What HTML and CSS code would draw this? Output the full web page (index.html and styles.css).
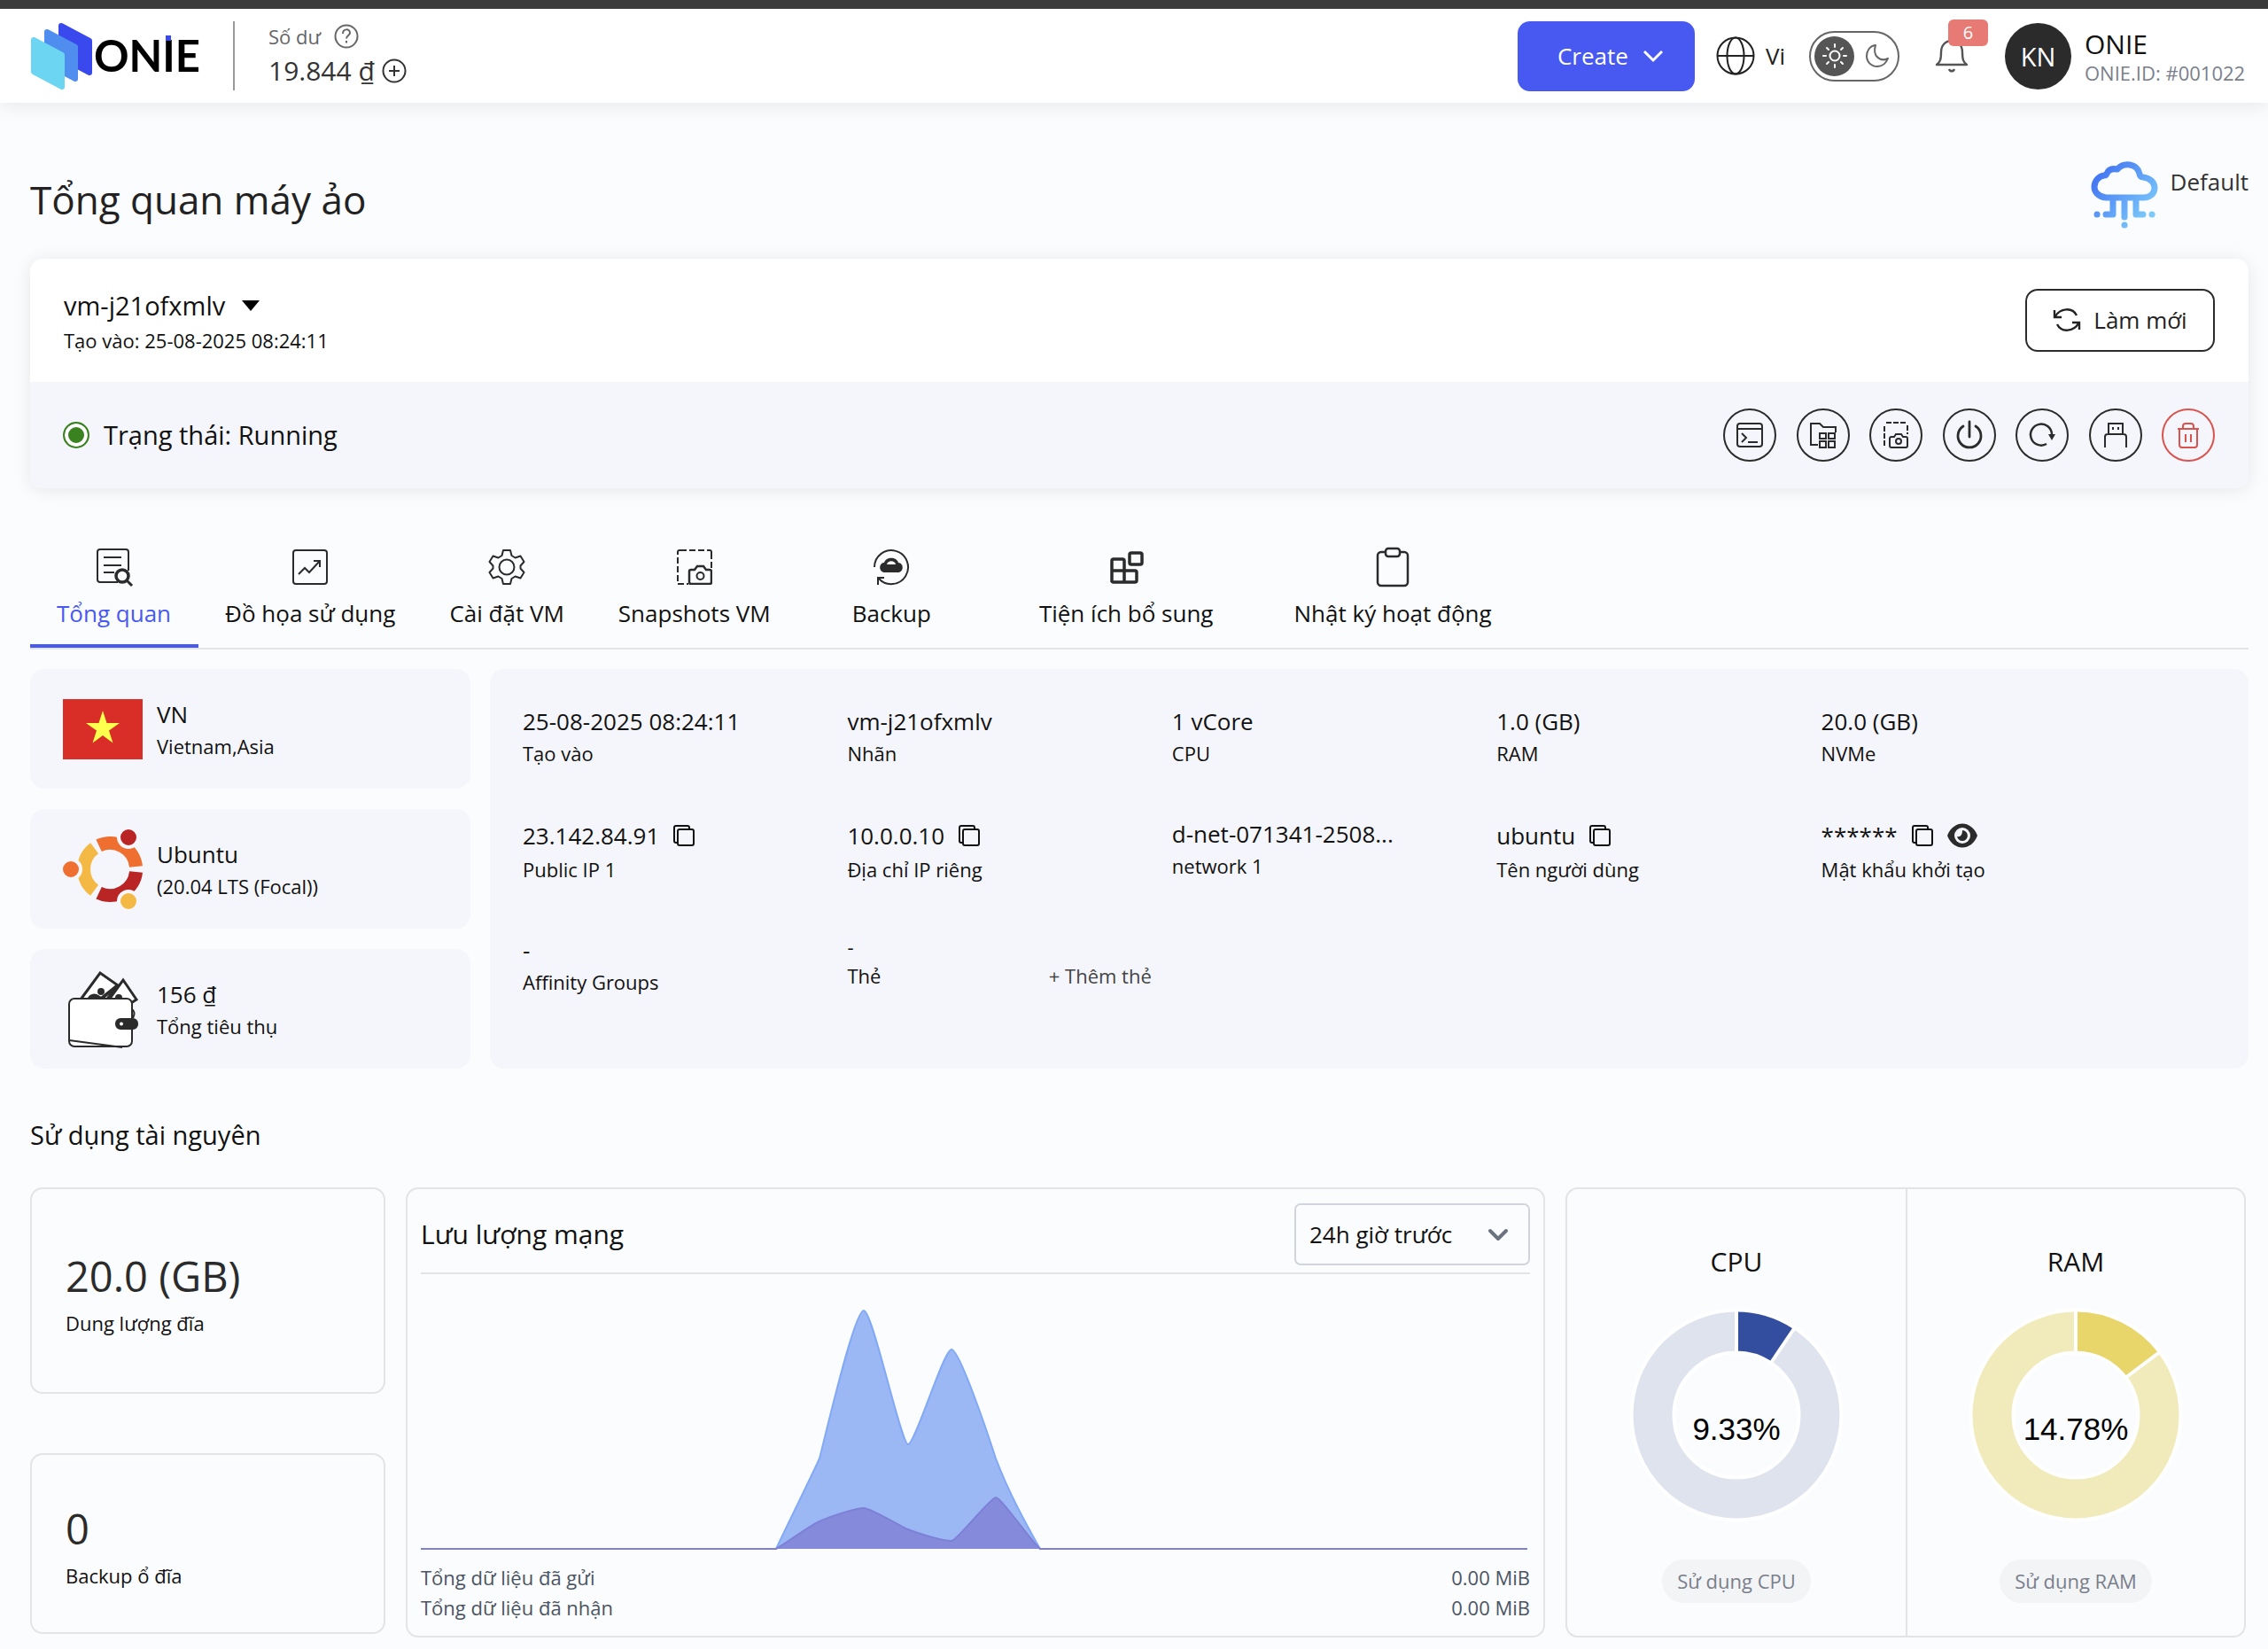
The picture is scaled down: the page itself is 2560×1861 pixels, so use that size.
FILE: index.html
```html
<!DOCTYPE html>
<html lang="vi">
<head>
  <meta charset="UTF-8" />
  <meta name="viewport" content="width=device-width, initial-scale=1.0"/>
  <title>Tổng quan máy ảo</title>
  <link rel="stylesheet" href="styles.css">
</head>
<body>
  <!-- shared icons -->
  <svg class="sprite" aria-hidden="true">
    <symbol id="copy" viewBox="0 0 24 24"><path d="M18 4V3a2 2 0 0 0-2-2H3a2 2 0 0 0-2 2v15a2 2 0 0 0 2 2h2" fill="none" stroke="currentColor" stroke-width="2"/><rect x="5" y="5" width="18" height="18" rx="2" fill="none" stroke="currentColor" stroke-width="2"/></symbol>
    <symbol id="snapshot" viewBox="0 0 40 40"><g fill="none" stroke="currentColor" stroke-width="2"><path d="M1 36V4M4 1h32M39 4v20M1 39h12" stroke-dasharray="7 3"/><path d="M1 5V3a2 2 0 0 1 2-2h3M34 1h3a2 2 0 0 1 2 2v3"/><path stroke-width="2.500" d="M14 25a2 2 0 0 1 2-2h4l3-4h7l3 4h4a2 2 0 0 1 2 2v12a2 2 0 0 1-2 2H16a2 2 0 0 1-2-2z"/><circle cx="26.500" cy="30" r="4"/></g></symbol>
  </svg>

  <header class="header">
    <a href="#" class="logo" aria-label="ONIE">
      <svg width="192" height="76" viewBox="0 0 192 76">
        <g stroke-width="6" stroke-linejoin="round">
          <path d="M34 4l32 17v36L34 40z" fill="#3a49ee" stroke="#3a49ee"/>
          <path d="M18 11l32 17v36L18 47z" fill="#4f8eef" stroke="#4f8eef"/>
          <path d="M3 20l32 17v36L3 56z" fill="#6bd5f2" stroke="#6bd5f2"/>
        </g>
        <text x="71" y="56" class="logo-text">ONIE</text>
        <rect x="152" y="15" width="6" height="6" fill="#3a49ee"/>
      </svg>
    </a>
    <div class="balance">
      <div class="balance-label">Số dư
        <svg width="28" height="28" viewBox="0 0 28 28" fill="none" stroke="currentColor" stroke-width="2"><circle cx="14" cy="14" r="12.500"/><path d="M10 11c0-6 8-6 8-1 0 3-4 3-4 6.500M14 19v2.500"/></svg>
      </div>
      <div class="balance-value">19.844 ₫
        <svg width="28" height="28" viewBox="0 0 28 28" fill="none" stroke="currentColor" stroke-width="2"><circle cx="14" cy="14" r="12.500"/><path d="M8 14h12M14 8v12"/></svg>
      </div>
    </div>

    <div class="header-right">
      <button class="btn-create">Create
        <svg width="24" height="14" viewBox="0 0 24 14" fill="none" stroke="currentColor" stroke-width="3"><path d="M2 2l10 10L22 2"/></svg>
      </button>
      <button class="lang">
        <svg width="44" height="44" viewBox="0 0 44 44" fill="none" stroke="currentColor" stroke-width="2"><circle cx="22" cy="22" r="20.500"/><ellipse cx="22" cy="22" rx="9.500" ry="20.500"/><path d="M2 22h40"/></svg>
        Vi
      </button>
      <button class="theme" aria-label="Theme">
        <span class="theme-sun">
          <svg width="28" height="28" viewBox="0 0 28 28" fill="none" stroke="#fff" stroke-width="2" stroke-linecap="round"><circle cx="14" cy="14" r="5.500"/><path d="M14 1v3M14 24v3M1 14h3M24 14h3M5 5l2 2M21 21l2 2M5 23l2-2M21 7l2-2"/></svg>
        </span>
        <svg width="28" height="28" viewBox="0 0 28 28" fill="none" stroke="#666" stroke-width="2" stroke-linejoin="round"><path d="M12 2C5 3 2 9 2 14c0 7 5 12 12 12 6 0 10-4 12-9-8 4-18-2-14-15z"/></svg>
      </button>
      <button class="bell" aria-label="Thông báo">
        <svg width="38" height="38" viewBox="0 0 38 38" fill="none" stroke="#555" stroke-width="2.400" stroke-linejoin="round"><path d="M2 29c4-3 5-6 5-14C7 7 12 2 19 2s12 5 12 13c0 8 1 11 5 14z"/><path d="M16 34c1 3 5 3 6 0"/></svg>
        <span class="badge">6</span>
      </button>
      <div class="avatar">KN</div>
      <div class="user">
        <div class="user-name">ONIE</div>
        <div class="user-id">ONIE.ID: #001022</div>
      </div>
    </div>
  </header>

  <main class="page">
    <div class="title-row">
      <h1>Tổng quan máy ảo</h1>
      <div class="project">
        <svg width="76" height="76" viewBox="0 0 76 76" fill="none" stroke="url(#cloud)" stroke-width="7" stroke-linecap="round" stroke-linejoin="round">
          <defs><linearGradient id="cloud" gradientUnits="userSpaceOnUse" x1="8" y1="10" x2="68" y2="60"><stop offset="0" stop-color="#4273f2"/><stop offset="1" stop-color="#7ccbfb"/></linearGradient></defs>
          <path d="M17 41C8 40 4 34 4 29c0-7 5-12 11-13 2 0 3-1 3-2 2-5 7-6 12-5 7-8 22-7 25 5 0 3 2 4 4 4 8 1 13 6 13 12 0 7-6 11-12 11z"/>
          <path d="M25 44v16h-8M38 44v19M51 44v16h8"/>
          <path d="M7 60h.1M69 60h.1M38 72h.1"/>
        </svg>
        <span>Default</span>
      </div>
    </div>

    <section class="vm-card">
      <div class="vm-top">
        <div>
          <button class="vm-name">vm-j21ofxmlv
            <svg width="20" height="12" viewBox="0 0 20 12"><path d="M0 0h20L10 12z"/></svg>
          </button>
          <div class="vm-created">Tạo vào: 25-08-2025 08:24:11</div>
        </div>
        <button class="btn-refresh">
          <svg width="32" height="28" viewBox="0 0 32 28" fill="none" stroke="currentColor" stroke-width="2.400"><path d="M2 3v8h8M3 10C8 1 22-1 27 9M30 25v-8h-8M29 18c-5 9-19 11-24 1"/></svg>
          Làm mới
        </button>
      </div>
      <div class="vm-status">
        <span class="dot"></span>
        <span>Trạng thái: Running</span>
        <div class="actions">
          <button aria-label="Console"><svg viewBox="0 0 30 30"><rect x="1" y="2" width="28" height="26" rx="3"/><path d="M1 8h28M6 13l5 5-5 5M13 23h11"/></svg></button>
          <button aria-label="Thư mục"><svg viewBox="0 0 30 30"><path d="M9 26H1V2h10l4 4h14v6"/><rect x="11" y="13" width="7" height="6"/><rect x="21" y="13" width="7" height="6"/><rect x="11" y="22" width="7" height="7"/><rect x="21" y="22" width="7" height="7"/></svg></button>
          <button aria-label="Snapshot"><svg viewBox="0 0 30 30"><path d="M2 27V3M4 1h22M28 4v10" stroke-dasharray="6 2"/><path d="M8 19a2 2 0 0 1 2-2h3l2-3h6l2 3h3a2 2 0 0 1 2 2v8a2 2 0 0 1-2 2H10a2 2 0 0 1-2-2z"/><circle cx="18" cy="22" r="3"/></svg></button>
          <button aria-label="Tắt nguồn"><svg viewBox="0 0 30 30"><path d="M15 0v17M8 5a13 13 0 1 0 14 0" stroke-width="2.800" stroke-linecap="round"/></svg></button>
          <button aria-label="Khởi động lại"><svg viewBox="0 0 30 30"><path d="M20 25a12 12 0 1 1 6-11" stroke-width="2.500"/><path d="M22 14h8l-4 7z" fill="currentColor" stroke="none"/></svg></button>
          <button aria-label="USB"><svg viewBox="0 0 30 30"><path d="M7 14V2h16v12M3 29V17a3 3 0 0 1 3-3h18a3 3 0 0 1 3 3v12M12 6v3M18 6v3"/></svg></button>
          <button class="danger" aria-label="Xóa"><svg viewBox="0 0 30 30"><path d="M3 8h24M9 8V5a3 3 0 0 1 3-3h6a3 3 0 0 1 3 3v3M5 8v18a3 3 0 0 0 3 3h14a3 3 0 0 0 3-3V8M12 14v9M18 14v9"/></svg></button>
        </div>
      </div>
    </section>

    <nav class="tabs">
      <a href="#" class="tab active">
        <svg viewBox="0 0 40 40"><path d="M24 37H4a3 3 0 0 1-3-3V3a3 3 0 0 1 3-3h29a3 3 0 0 1 3 3v21M8 9h20M8 18h20M8 26h12"/><circle cx="29" cy="30" r="7" stroke-width="3.500"/><path d="M34 35l6 6" stroke-width="3"/></svg>
        Tổng quan
      </a>
      <a href="#" class="tab">
        <svg viewBox="0 0 40 40"><rect x="1" y="1" width="38" height="38" rx="3"/><path d="M7 28l7-7 5 5 12-13M24 13h7v7"/></svg>
        Đồ họa sử dụng
      </a>
      <a href="#" class="tab">
        <svg viewBox="0 0 40 40"><path d="M16 1h8l1.500 6 4 2.500 6-2 4 6.500-4 4.500v3l4 4.500-4 6.500-6-2-4 2.500L24 39h-8l-1.500-6-4-2.500-6 2L.5 26l4-4.500v-3L.5 14l4-6.500 6 2 4-2.500z" stroke-linejoin="round"/><circle cx="20" cy="20" r="8.500"/></svg>
        Cài đặt VM
      </a>
      <a href="#" class="tab"><svg><use href="#snapshot"/></svg>Snapshots VM</a>
      <a href="#" class="tab wide">
        <svg viewBox="0 0 40 40"><path d="M1 20a19 19 0 1 1 5 13M5 40v-8h7"/><path d="M13 26c-8 0-7-11-1-11 2-7 14-7 16 0 6 0 7 11-1 11z" fill="currentColor" stroke="none"/><path d="M15 17c1-5 9-5 10 0z" fill="#fbfcfe" stroke="none"/></svg>
        Backup
      </a>
      <a href="#" class="tab wide">
        <svg viewBox="0 0 40 40"><g stroke-width="3.500"><path d="M4 37V13a2 2 0 0 1 2-2h10a2 2 0 0 1 2 2v24M4 24h26a2 2 0 0 1 2 2v9a2 2 0 0 1-2 2H6a2 2 0 0 1-2-2"/><rect x="24" y="4" width="14" height="13" rx="2"/></g></svg>
        Tiện ích bổ sung
      </a>
      <a href="#" class="tab">
        <svg viewBox="0 0 40 40"><g stroke-width="2.500"><path d="M12 3H7a4 4 0 0 0-4 4v30a4 4 0 0 0 4 4h26a4 4 0 0 0 4-4V7a4 4 0 0 0-4-4h-5"/><rect x="12" y="-1" width="16" height="9" rx="3"/></g></svg>
        Nhật ký hoạt động
      </a>
    </nav>

    <section class="overview">
      <div class="side">
        <div class="side-card">
          <svg width="90" height="68" viewBox="0 0 90 68"><path d="M0 0h90v68H0z" fill="#d92d27"/><path d="M45 13l4.500 14h14.500l-12 8.500 4.500 14L45 41l-11.500 8.500 4.500-14L26 27h14.500z" fill="#ffff4d"/></svg>
          <div class="side-text"><div class="value">VN</div><div class="label">Vietnam,Asia</div></div>
        </div>
        <div class="side-card">
          <svg width="90" height="90" viewBox="0 0 90 90" fill="none" stroke-width="15">
            <g transform="translate(53 45)">
              <path d="M29.500 -3A29.500 29.500 0 0 0 -12.400 -26.800" stroke="#ee6f2f"/>
              <path d="M-17.400 -23.800A29.500 29.500 0 0 0 -17.400 23.800" stroke="#f4b944"/>
              <path d="M-12.400 26.800A29.500 29.500 0 0 0 29.500 3" stroke="#b92524"/>
              <g stroke="#f5f6fb" stroke-width="4"><circle cx="-44" cy="0" r="11" fill="#ee6f2f"/><circle cx="21" cy="-36" r="11" fill="#b92524"/><circle cx="21" cy="36" r="11" fill="#f4b944"/></g>
            </g>
          </svg>
          <div class="side-text"><div class="value">Ubuntu</div><div class="label">(20.04 LTS (Focal))</div></div>
        </div>
        <div class="side-card">
          <svg width="90" height="90" viewBox="0 0 90 90" fill="#fff" stroke="#2b2b2b" stroke-width="2">
            <path d="M20 34L42 4l20 14-14 18z" stroke-width="3"/><path d="M28 34c3-7 9-6 12-4l6 4z" fill="#2b2b2b"/><path d="M42 34l20-16" stroke-width="4"/><circle cx="43" cy="25" r="3" fill="#2b2b2b"/>
            <path d="M52 34l16-22 15 22-6 4z" stroke-width="3"/><circle cx="63" cy="32" r="3" fill="#2b2b2b"/>
            <path d="M13 33h59a6 6 0 0 1 6 6v42a6 6 0 0 1-6 6H13a6 6 0 0 1-6-6V39a6 6 0 0 1 6-6z"/><path d="M7 80l60 8" fill="none"/>
            <path d="M78 45c3 2 3 6 1 10" fill="none"/>
            <rect x="60" y="56" width="24" height="11" rx="5" fill="#2b2b2b"/><circle cx="66" cy="61.500" r="2" stroke="none"/>
          </svg>
          <div class="side-text"><div class="value">156 ₫</div><div class="label">Tổng tiêu thụ</div></div>
        </div>
      </div>

      <div class="details">
        <div><div class="value">25-08-2025 08:24:11</div><div class="label">Tạo vào</div></div>
        <div><div class="value">vm-j21ofxmlv</div><div class="label">Nhãn</div></div>
        <div><div class="value">1 vCore</div><div class="label">CPU</div></div>
        <div><div class="value">1.0 (GB)</div><div class="label">RAM</div></div>
        <div><div class="value">20.0 (GB)</div><div class="label">NVMe</div></div>

        <div><div class="value with-icon">23.142.84.91 <button aria-label="Copy"><svg width="24" height="24"><use href="#copy"/></svg></button></div><div class="label">Public IP 1</div></div>
        <div><div class="value with-icon">10.0.0.10 <button aria-label="Copy"><svg width="24" height="24"><use href="#copy"/></svg></button></div><div class="label">Địa chỉ IP riêng</div></div>
        <div><div class="value">d-net-071341-2508...</div><div class="label">network 1</div></div>
        <div><div class="value with-icon">ubuntu <button aria-label="Copy"><svg width="24" height="24"><use href="#copy"/></svg></button></div><div class="label">Tên người dùng</div></div>
        <div><div class="value with-icon">****** <button aria-label="Copy"><svg width="24" height="24"><use href="#copy"/></svg></button>
          <button aria-label="Hiện mật khẩu"><svg width="34" height="28" viewBox="0 0 34 28"><path d="M0 14C7-4 27-4 34 14 27 32 7 32 0 14z" fill="#2b2b2b"/><circle cx="17" cy="14" r="9" fill="#f5f6fb"/><path d="M17 8a6 6 0 1 1-6 7c4 1 6-2 6-7z" fill="#2b2b2b"/></svg></button></div><div class="label">Mật khẩu khởi tạo</div></div>

        <div><div class="value">-</div><div class="label">Affinity Groups</div></div>
        <div><div class="tag-value">-</div><div class="label tag-row">Thẻ <button class="add-tag">+ Thêm thẻ</button></div></div>
      </div>
    </section>

    <h2>Sử dụng tài nguyên</h2>

    <section class="usage">
      <div class="totals">
        <div class="box total-disk"><div class="number">20.0 (GB)</div><div class="number-label">Dung lượng đĩa</div></div>
        <div class="box total-backup"><div class="number">0</div><div class="number-label">Backup ổ đĩa</div></div>
      </div>

      <div class="box traffic">
        <div class="traffic-head">
          <label for="range">Lưu lượng mạng</label>
          <div class="select-wrap">
            <select id="range"><option>24h giờ trước</option></select>
            <svg width="24" height="16" viewBox="0 0 24 16" fill="none" stroke="#6b7280" stroke-width="4" stroke-linecap="round" stroke-linejoin="round"><path d="M3 3l9 9 9-9"/></svg>
          </div>
        </div>
        <svg class="chart" viewBox="0 0 1252 312" preserveAspectRatio="none">
          <path d="M0 310H401C420 270 440 230 450 208C462 160 490 41 500 41C510 41 542 192 550 192C558 192 590 85 599 85C608 85 640 180 649 208C665 250 685 285 699 310H1249" fill="#9bb8f4" stroke="#82a9f5" stroke-width="2"/>
          <path d="M0 310H401C415 302 440 283 450 279C465 272 492 264 500 264C508 264 540 284 550 288C562 293 590 301 599 301C605 301 643 252 649 252C655 252 690 303 699 310H1249" fill="#858adb" stroke="#7d80d6" stroke-width="2"/>
        </svg>
        <div class="traffic-foot">
          <div><span>Tổng dữ liệu đã gửi</span><span>0.00 MiB</span></div>
          <div><span>Tổng dữ liệu đã nhận</span><span>0.00 MiB</span></div>
        </div>
      </div>

      <div class="box gauges">
        <div class="gauge">
          <h3>CPU</h3>
          <svg width="242" height="242" viewBox="0 0 242 242" fill="none">
            <circle cx="121" cy="121" r="94.500" stroke="#fff" stroke-width="52"/>
            <circle cx="121" cy="121" r="94.500" stroke="#dfe3ee" stroke-width="44"/>
            <circle cx="121" cy="121" r="94.500" stroke="#344e9f" stroke-width="44" pathLength="100" stroke-dasharray="9.330 100" transform="rotate(-90 121 121)"/>
            <path d="M121 3v48M160 62l27-40" stroke="#fff" stroke-width="4"/>
            <text x="121" y="149" text-anchor="middle">9.33%</text>
          </svg>
          <span class="pill">Sử dụng CPU</span>
        </div>
        <div class="gauge">
          <h3>RAM</h3>
          <svg width="242" height="242" viewBox="0 0 242 242" fill="none">
            <circle cx="121" cy="121" r="94.500" stroke="#fff" stroke-width="52"/>
            <circle cx="121" cy="121" r="94.500" stroke="#f1eabb" stroke-width="44"/>
            <circle cx="121" cy="121" r="94.500" stroke="#e8d66a" stroke-width="44" pathLength="100" stroke-dasharray="14.780 100" transform="rotate(-90 121 121)"/>
            <path d="M121 3v48M177 79l40-30" stroke="#fff" stroke-width="4"/>
            <text x="121" y="149" text-anchor="middle">14.78%</text>
          </svg>
          <span class="pill">Sử dụng RAM</span>
        </div>
      </div>
    </section>
  </main>
</body>
</html>
```
FILE: styles.css
```css
* {
  box-sizing: border-box;
}
body {
  margin: 0;
  font-family: "Open Sans", "Noto Sans", sans-serif;
  font-size: 26px;
  line-height: 36px;
  color: #111;
  background-color: #fbfcfe;
}
h1, h2, h3 {
  margin: 0;
  font-weight: 400;
}
button, select {
  font: inherit;
  color: inherit;
  background: none;
  border: 0;
  padding: 0;
  cursor: pointer;
}
svg {
  display: block;
  flex: none;
  overflow: visible;
}
.sprite {
  position: absolute;
  width: 0;
  height: 0;
}

/* header */
.header {
  display: flex;
  align-items: center;
  height: 116px;
  padding: 0 22px 0 35px;
  border-top: 10px solid #3b3b3b;
  background-color: #fff;
  box-shadow: 0 4px 20px rgba(0, 0, 0, 0.08);
}
.logo-text {
  font-family: Lato, sans-serif;
  font-weight: 700;
  font-size: 49px;
  fill: #000;
}
.balance {
  margin-left: 36px;
  padding-left: 38px;
  border-left: 2px solid #999;
  color: #333;
}
.balance-label, .balance-value {
  display: flex;
  align-items: center;
}
.balance-label {
  gap: 15px;
  font-size: 22px;
  line-height: 34px;
  color: #666;
}
.balance-value {
  gap: 8px;
  font-size: 30px;
  line-height: 44px;
}
.header-right {
  display: flex;
  align-items: center;
  margin-left: auto;
}
.btn-create {
  display: flex;
  align-items: center;
  justify-content: center;
  gap: 16px;
  width: 200px;
  height: 79px;
  padding-left: 10px;
  border-radius: 14px;
  color: #fff;
  background-color: #4759f1;
}
.lang {
  display: flex;
  align-items: center;
  gap: 12px;
  margin-left: 24px;
  color: #222;
}
.theme {
  display: flex;
  align-items: center;
  gap: 12px;
  width: 102px;
  height: 57px;
  margin-left: 27px;
  padding: 0 4px;
  border: 2px solid #666;
  border-radius: 29px;
}
.theme-sun {
  display: flex;
  align-items: center;
  justify-content: center;
  width: 45px;
  height: 45px;
  border-radius: 50%;
  background-color: #555;
}
.bell {
  position: relative;
  margin-left: 40px;
}
.badge {
  position: absolute;
  top: -22px;
  left: 15px;
  width: 45px;
  border-radius: 6px;
  font-size: 20px;
  line-height: 30px;
  color: #fff;
  background-color: #e77a74;
}
.avatar {
  width: 75px;
  margin-left: 41px;
  border-radius: 50%;
  font-size: 29px;
  line-height: 75px;
  text-align: center;
  color: #fff;
  background-color: #2b2b2b;
}
.user {
  min-width: 185px;
  margin-left: 15px;
}
.user-name {
  font-size: 30px;
  line-height: 38px;
}
.user-id {
  font-size: 22px;
  line-height: 26px;
  color: #7a7f8c;
}

/* page */
.page {
  padding: 66px 22px 14px 34px;
}
.title-row {
  display: flex;
  justify-content: space-between;
  margin-bottom: 34px;
}
h1 {
  align-self: flex-end;
  font-size: 44px;
  line-height: 66px;
  color: #222;
}
.project {
  display: flex;
  gap: 14px;
  color: #333;
}
.project span {
  padding-top: 5px;
}
.vm-card {
  border-radius: 14px;
  overflow: hidden;
  background-color: #fff;
  box-shadow: 0 2px 20px rgba(0, 0, 0, 0.09);
}
.vm-top {
  display: flex;
  align-items: center;
  justify-content: space-between;
  padding: 30px 38px 31px;
}
.vm-name {
  display: flex;
  align-items: center;
  gap: 19px;
  font-size: 29px;
  line-height: 46px;
}
.vm-created {
  font-size: 22px;
  line-height: 32px;
}
.btn-refresh {
  display: flex;
  align-items: center;
  justify-content: center;
  gap: 14px;
  width: 214px;
  height: 71px;
  border: 2px solid #2b2b2b;
  border-radius: 14px;
  color: #222;
}
.vm-status {
  display: flex;
  align-items: center;
  height: 120px;
  padding: 0 38px 0 37px;
  font-size: 29px;
  background-color: #f5f6fb;
}
.dot {
  width: 30px;
  height: 30px;
  margin-right: 16px;
  border: 2px solid #3a8220;
  border-radius: 50%;
  background-color: #3a8220;
  box-shadow: inset 0 0 0 4px #fff;
}
.actions {
  display: flex;
  justify-content: space-between;
  width: 555px;
  margin-left: auto;
}
.actions button {
  display: flex;
  align-items: center;
  justify-content: center;
  width: 60px;
  height: 60px;
  border: 2px solid #2b2b2b;
  border-radius: 50%;
  color: #2b2b2b;
}
.actions svg {
  width: 30px;
  height: 30px;
  fill: none;
  stroke: currentColor;
  stroke-width: 2;
}
.actions .danger {
  border-color: #d9534f;
  color: #d9534f;
}

/* tabs */
.tabs {
  display: flex;
  margin: 69px 0 22px;
  border-bottom: 2px solid #e3e4e6;
}
.tab {
  display: flex;
  flex-direction: column;
  align-items: center;
  gap: 13px;
  padding: 0 31px 16px 30px;
  border-bottom: 4px solid transparent;
  line-height: 38px;
  color: #111;
  text-decoration: none;
}
.tab svg {
  width: 40px;
  height: 40px;
  fill: none;
  stroke: currentColor;
  stroke-width: 2;
  color: #2b2b2b;
}
.tab.wide {
  padding-left: 61px;
  padding-right: 61px;
}
.tab.active {
  color: #4759f1;
  border-bottom-color: #4759f1;
}

/* overview */
.overview {
  display: grid;
  grid-template-columns: 497px minmax(0, 1fr);
  gap: 22px;
}
.side {
  display: flex;
  flex-direction: column;
  gap: 23px;
}
.side-card {
  display: flex;
  align-items: center;
  gap: 16px;
  height: 135px;
  padding: 0 37px;
  border-radius: 16px;
  background-color: #f5f6fb;
}
.side-text {
  padding-top: 3px;
}
.label {
  font-size: 22px;
  line-height: 37px;
}
.details {
  display: grid;
  grid-template-columns: repeat(5, minmax(0, 1fr));
  align-content: start;
  gap: 54px 23px;
  padding: 41px 139px 0 37px;
  border-radius: 16px;
  background-color: #f5f6fb;
}
.with-icon {
  display: flex;
  align-items: center;
  gap: 16px;
  line-height: 40px;
}
.tag-value {
  font-size: 22px;
  line-height: 29px;
}
.tag-row {
  display: flex;
  justify-content: space-between;
}
.add-tag {
  color: #444;
}

/* usage */
h2 {
  margin: 53px 0 37px;
  font-size: 29px;
  line-height: 44px;
}
.usage {
  display: grid;
  grid-template-columns: 401px minmax(0, 1fr) 768px;
  gap: 23px;
  padding-right: 3px;
}
.box {
  border: 2px solid #e3e4e6;
  border-radius: 14px;
}
.totals {
  display: flex;
  flex-direction: column;
  justify-content: space-between;
  padding-bottom: 4px;
}
.total-disk {
  padding: 66px 38px 56px;
}
.total-backup {
  padding: 51px 38px 42px;
}
.number {
  font-size: 47px;
  line-height: 64px;
  color: #2b2b2b;
}
.number-label {
  font-size: 22px;
  line-height: 43px;
}
.traffic {
  padding: 16px 15px 15px;
}
.traffic-head {
  display: flex;
  align-items: center;
  justify-content: space-between;
  padding-bottom: 8px;
  border-bottom: 2px solid #e3e4e6;
  font-size: 30px;
}
.select-wrap {
  position: relative;
  font-size: 26px;
}
.select-wrap select {
  appearance: none;
  width: 266px;
  height: 70px;
  padding: 0 15px;
  border: 2px solid #d1d5db;
  border-radius: 7px;
}
.select-wrap svg {
  position: absolute;
  right: 24px;
  top: 28px;
  pointer-events: none;
}
.chart {
  width: 100%;
  height: 312px;
}
.traffic-foot {
  margin-top: 13px;
  font-size: 22px;
  line-height: 34px;
  color: #4b5563;
}
.traffic-foot div {
  display: flex;
  justify-content: space-between;
}
.gauges {
  display: grid;
  grid-template-columns: 1fr 1fr;
}
.gauge {
  display: flex;
  flex-direction: column;
  align-items: center;
  padding-top: 60px;
}
.gauge + .gauge {
  border-left: 2px solid #e3e4e6;
}
.gauge h3 {
  margin-bottom: 30px;
  font-size: 30px;
  line-height: 44px;
}
.gauge text {
  font-family: "Liberation Sans", Arial, sans-serif;
  font-size: 35px;
  fill: #000;
}
.pill {
  margin-top: 42px;
  padding: 0 17px;
  border-radius: 25px;
  font-size: 22px;
  line-height: 49px;
  color: #7a7f8c;
  background-color: #f3f4f6;
}
```
